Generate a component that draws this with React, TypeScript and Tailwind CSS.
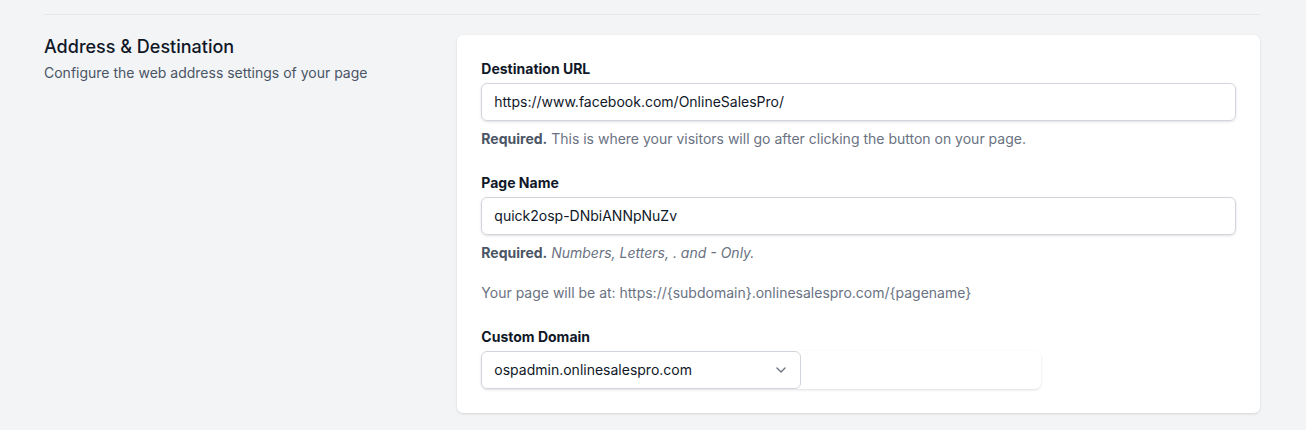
import React from 'react';
import { ChevronDown } from 'lucide-react';

const App: React.FC = () => {
  return (
    <div className="min-h-screen bg-gray-100 pl-[44px] pr-[46px] pt-[14px] pb-5" style={{ fontFamily: 'Inter, "Noto Sans", sans-serif' }}>
      <div className="border-t border-gray-200" />

      <div className="mt-5 grid grid-cols-3 gap-6">
        <div>
          <h3 className="text-lg leading-6 font-medium text-gray-900">Address &amp; Destination</h3>
          <p className="mt-1 text-sm text-gray-600">Configure the web address settings of your page</p>
        </div>

        <div className="col-span-2 bg-white rounded-md shadow-sm p-6 space-y-6">
          <div>
            <label className="block text-sm font-bold text-gray-900">Destination URL</label>
            <input
              type="text"
              defaultValue="https://www.facebook.com/OnlineSalesPro/"
              className="mt-1 block w-full rounded-md border border-gray-300 shadow-sm px-3 py-2 text-sm text-gray-900 outline-none"
            />
            <p className="mt-2 text-sm text-gray-500">
              <span className="font-bold text-gray-600">Required.</span> This is where your visitors will go after clicking the button on your page.
            </p>
          </div>

          <div>
            <label className="block text-sm font-bold text-gray-900">Page Name</label>
            <input
              type="text"
              defaultValue="quick2osp-DNbiANNpNuZv"
              className="mt-1 block w-full rounded-md border border-gray-300 shadow-sm px-3 py-2 text-sm text-gray-900 outline-none"
            />
            <p className="mt-2 text-sm text-gray-500">
              <span className="font-bold text-gray-600">Required.</span> <em>Numbers, Letters, . and - Only.</em>
            </p>
            <p className="mt-5 text-sm text-gray-500">Your page will be at: https://{'{subdomain}'}.onlinesalespro.com/{'{pagename}'}</p>
          </div>

          <div>
            <label className="block text-sm font-bold text-gray-900">Custom Domain</label>
            <div className="mt-1 w-[560px] rounded-md shadow-sm">
              <div className="relative w-[320px]">
                <select
                  defaultValue="ospadmin.onlinesalespro.com"
                  className="block w-full appearance-none rounded-md border border-gray-300 bg-white pl-3 pr-10 py-2 text-sm text-gray-900 outline-none"
                >
                  <option>ospadmin.onlinesalespro.com</option>
                </select>
                <ChevronDown size={16} strokeWidth={2} className="pointer-events-none absolute right-[12px] top-1/2 -translate-y-1/2 text-gray-500" />
              </div>
            </div>
          </div>
        </div>
      </div>
    </div>
  );
};

export default App;
